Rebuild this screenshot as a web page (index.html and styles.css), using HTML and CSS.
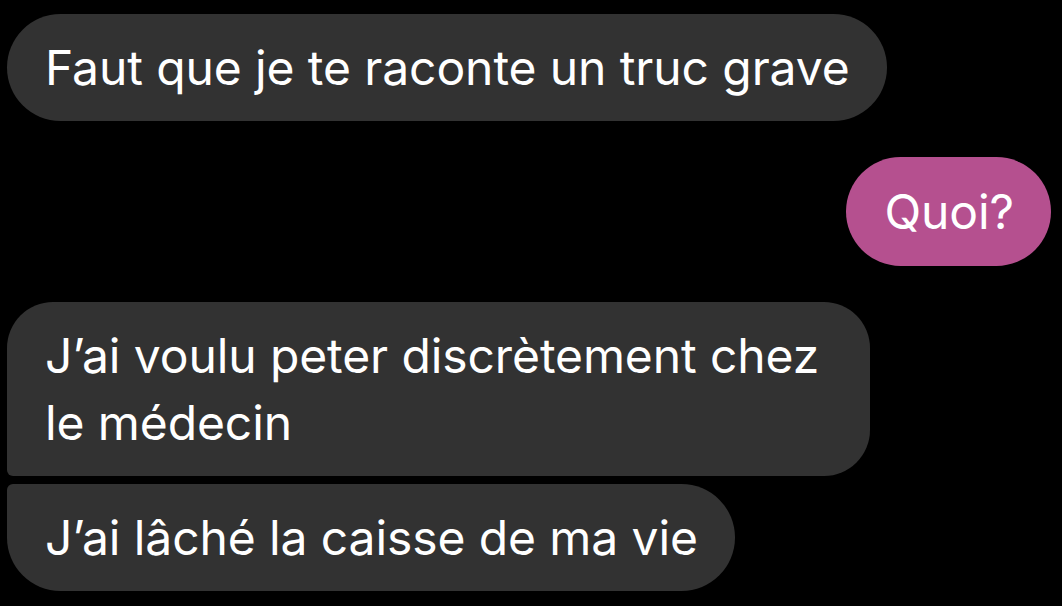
FILE: index.html
```html
<!DOCTYPE html>
<html lang="fr">
<head>
<meta charset="utf-8">
<link rel="stylesheet" href="styles.css">
</head>
<body>
<main class="chat">
  <div class="row in"><div class="bubble gray single">Faut que je te raconte un truc grave</div></div>
  <div class="row out"><div class="bubble pink single">Quoi?</div></div>
  <div class="group">
    <div class="row in"><div class="bubble gray first multi">J’ai voulu peter discrètement chez<br>le médecin</div></div>
    <div class="row in"><div class="bubble gray last">J’ai lâché la caisse de ma vie</div></div>
  </div>
</main>
</body>
</html>
```

FILE: styles.css
```css
html, body {
  margin: 0;
  padding: 0;
  background: #000;
}
.chat {
  width: 1062px;
  height: 606px;
  box-sizing: border-box;
  padding: 14px 11px 0 7px;
  display: flex;
  flex-direction: column;
  gap: 36px;
  font-family: Inter, "Noto Sans", sans-serif;
  overflow: hidden;
}
.group {
  display: flex;
  flex-direction: column;
  gap: 8px;
}
.row {
  display: flex;
}
.row.out {
  justify-content: flex-end;
}
.bubble {
  color: #fff;
  font-size: 48px;
  line-height: 67px;
  padding: 20px 37px 20px 38px;
  letter-spacing: -0.1px;
}
.gray { background: #323232; }
.pink {
  background: #b5508f;
  padding-top: 21px;
  padding-bottom: 21px;
}
.single { border-radius: 55px; }
.multi { padding-right: 51px; }
.first { border-radius: 46px 46px 46px 6px; }
.last { border-radius: 6px 54px 54px 54px; }
```
